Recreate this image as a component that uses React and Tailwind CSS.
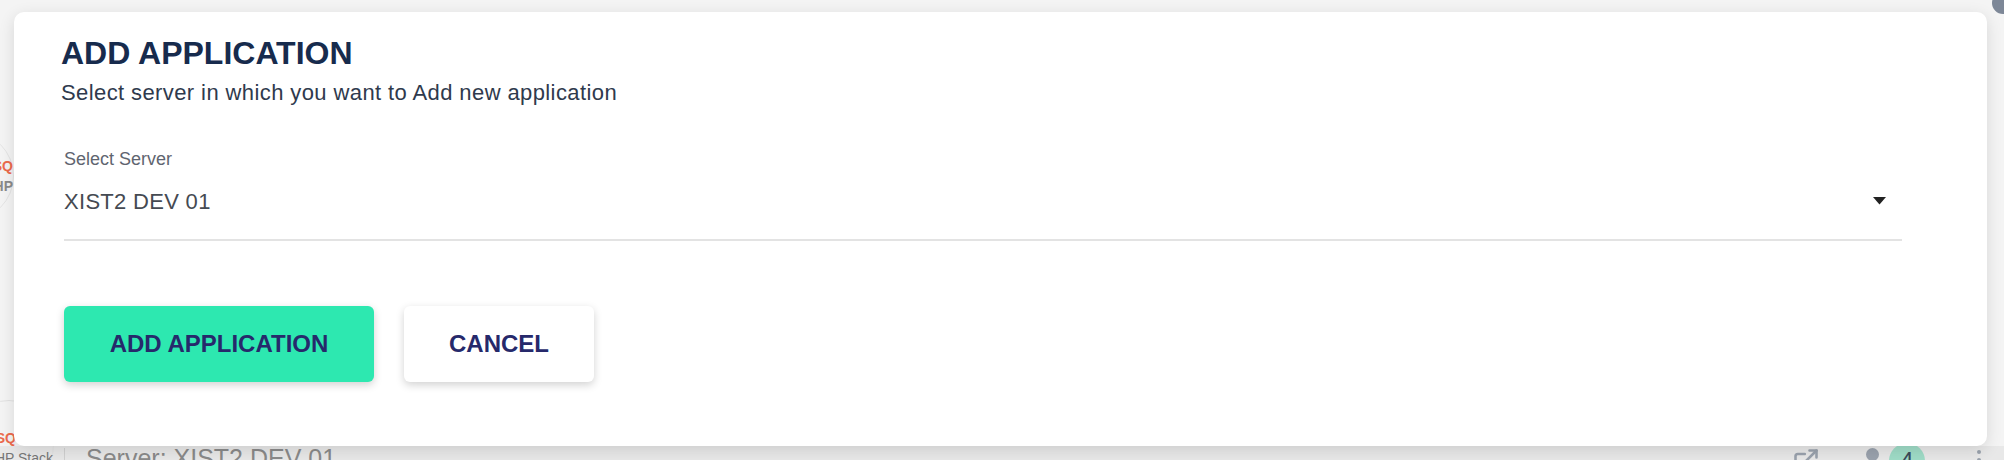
import { ExternalLink } from 'lucide-react';

function BackgroundPage() {
  return (
    <div className="w-[2004px] h-[460px] bg-[#f4f4f4] flex flex-col overflow-hidden">
      <div className="h-[131px]" />
      <div className="flex items-center h-[90px]">
        <div className="w-[90px] h-[90px] -ml-[76px] rounded-full border border-[#e4e4e4] flex flex-col items-end justify-center leading-none">
          <span className="text-[14px] font-bold text-[#ec6a4c]">SQ</span>
          <span className="text-[14px] font-bold text-[#8a8a8a] mt-[6px]">HP</span>
        </div>
      </div>
      <div className="h-[179px]" />
      <div className="relative flex items-start h-[60px]">
        <div className="absolute left-0 right-0 top-[46px] bottom-0 bg-[#e8e8e8]" />
        <div className="relative w-[90px] h-[90px] -ml-[36px] rounded-full border border-[#e2e2e2] flex flex-col items-end pt-[30px] leading-none">
          <span className="text-[14px] font-bold text-[#ec6a4c] mr-[37px]">SQ</span>
          <span className="text-[14px] text-[#777] mt-[6px]">HP Stack</span>
        </div>
        <div className="relative h-[30px] w-px bg-[#d0d0d0] mt-[48px] ml-[10px]" />
        <span className="relative ml-[21px] mt-[46px] text-[25px] leading-none text-[#8a8a8a]">Server: XIST2 DEV 01</span>
        <div className="relative ml-auto mr-[23px] mt-[47px] flex items-start text-[#9aa2ad]">
          <ExternalLink size={28} strokeWidth={2.2} />
          <span className="ml-[46px] mt-[1px] w-[13px] h-[13px] rounded-full bg-[#9aa2ad]" />
          <div className="ml-[10px] -mt-[4px] w-[36px] h-[36px] rounded-full bg-[#9fdcc7] flex items-center justify-center text-[24px] text-[#3b4a5a]">4</div>
          <div className="ml-[52px] mt-[3px] flex flex-col gap-[4px]">
            <span className="w-[4px] h-[4px] rounded-full bg-[#9aa2ad]" />
            <span className="w-[4px] h-[4px] rounded-full bg-[#9aa2ad]" />
          </div>
        </div>
      </div>
    </div>
  );
}

export default function App() {
  return (
    <div className="relative w-[2004px] h-[460px] overflow-hidden" style={{ fontFamily: '"Liberation Sans", Arial, sans-serif' }}>
      <BackgroundPage />
      <div className="absolute right-[-10px] top-[-8px] w-[22px] h-[22px] rounded-full bg-[#7d8797]" />
      <div className="absolute left-[14px] top-[12px] w-[1973px] h-[434px] bg-white rounded-[10px] shadow-[0_4px_16px_rgba(0,0,0,0.12)] px-[47px] pt-[25px]">
        <h2 className="text-[32px] leading-[32px] font-bold text-[#172b4d]">ADD APPLICATION</h2>
        <p className="mt-[11px] text-[22px] leading-[26px] tracking-[0.4px] text-[#2f3a4d]">Select server in which you want to Add new application</p>
        <div className="ml-[3px] w-[1838px]">
          <label className="block mt-[42px] text-[18px] leading-[22px] text-[#5f6570]">Select Server</label>
          <div className="flex items-center justify-between h-[71px] pb-[7px] border-b-2 border-[#e3e3e3]">
            <span className="text-[22px] tracking-[0.3px] text-[#454a52]">XIST2 DEV 01</span>
            <svg width="13" height="8" viewBox="0 0 13 8" className="mr-[16px]">
              <path d="M0 0 L13 0 L6.5 7.5 Z" fill="#222" />
            </svg>
          </div>
          <div className="flex gap-[30px] mt-[65px]">
            <button className="w-[310px] h-[76px] rounded-[6px] bg-[#2de8b0] text-[#26296b] text-[24px] font-bold shadow-[0_3px_8px_rgba(0,0,0,0.18)]">ADD APPLICATION</button>
            <button className="w-[190px] h-[76px] rounded-[6px] bg-white text-[#26296b] text-[24px] font-bold shadow-[0_3px_8px_rgba(0,0,0,0.18)]">CANCEL</button>
          </div>
        </div>
      </div>
    </div>
  );
}
